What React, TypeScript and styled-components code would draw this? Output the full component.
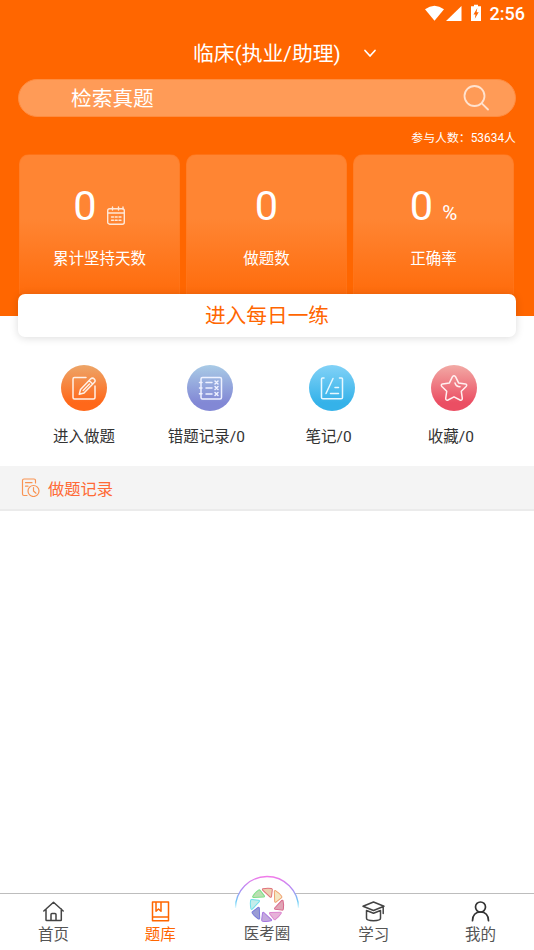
import React from "react";
import styled, { createGlobalStyle } from "styled-components";

const Global = createGlobalStyle`
  * { box-sizing: border-box; }
  body { margin: 0; background: #fff; font-family: Roboto, "Noto Sans CJK SC", sans-serif; }
  svg { display: block; flex: none; }
`;

const Screen = styled.div`
  width: 534px;
  height: 950px;
  display: flex;
  flex-direction: column;
  background: #fff;
  overflow: hidden;
`;

const Header = styled.header`
  height: 316px;
  flex: none;
  background: #ff6600;
  color: #fff;
`;

const StatusBar = styled.div`
  height: 27px;
  padding: 0 9px 0 0;
  display: flex;
  justify-content: flex-end;
  align-items: center;
  font-size: 18px;
  font-weight: 500;
  line-height: 27px;
`;

const Clock = styled.span`
  margin-left: 6px;
`;

const TitleBar = styled.div`
  height: 52px;
  padding: 2px 0 0 193px;
  display: flex;
  align-items: center;
  gap: 22px;
  font-size: 20.8px;
  line-height: 50px;
  white-space: nowrap;
`;

const SearchBox = styled.div`
  margin: 0 18px;
  height: 38px;
  padding: 0 26px 0 52px;
  border-radius: 19px;
  background: #ff9b57;
  border: 1px solid #ff8c3f;
  display: flex;
  align-items: center;
  justify-content: space-between;
  font-size: 20.7px;
  line-height: 36px;
`;

const SearchHint = styled.span`
  padding-top: 2px;
`;

const Participants = styled.div`
  height: 37px;
  padding: 3px 18px 0 0;
  text-align: right;
  font-size: 11.9px;
  line-height: 37px;
`;

const Stats = styled.div`
  display: grid;
  grid-template-columns: repeat(3, 161px);
  gap: 6px;
  padding-left: 19px;
`;

const StatCard = styled.div`
  height: 140px;
  border-radius: 10px 10px 0 0;
  background: linear-gradient(#ff8533 0%, #ff8533 46%, #ff6c0c 100%);
  border: 1px solid rgba(255, 120, 30, 0.5);
  border-bottom: 0;
  display: flex;
  flex-direction: column;
  align-items: center;
`;

const StatValue = styled.div`
  height: 80px;
  padding-top: 26px;
  display: flex;
  align-items: baseline;
  gap: 9px;
  font-size: 41.5px;
  line-height: 49px;
`;

const Unit = styled.span`
  font-size: 20.5px;
`;

const CalendarSlot = styled.span`
  align-self: flex-start;
  margin: 25px 0 0 0;
`;

const StatLabel = styled.div`
  margin-top: 12px;
  font-size: 15.5px;
  line-height: 24px;
`;

const DailyButton = styled.button`
  position: relative;
  flex: none;
  height: 43px;
  margin: -22px 18px 0;
  padding: 1px 0 0;
  border: 0;
  border-radius: 7px;
  background: #fff;
  color: #ff6600;
  box-shadow: 0 1px 8px rgba(0, 0, 0, 0.14);
  font: 20.7px/43px Roboto, "Noto Sans CJK SC", sans-serif;
`;

const Shortcuts = styled.div`
  height: 129px;
  flex: none;
  display: grid;
  grid-template-columns: repeat(4, 122.25px);
  padding: 28px 0 0 23px;
`;

const Shortcut = styled.div`
  display: flex;
  flex-direction: column;
  align-items: center;
  color: #333;
  font-size: 15.5px;
  line-height: 24px;
`;

const Disc = styled.div<{ $from: string; $to: string; $shift?: number }>`
  width: 46px;
  height: 46px;
  margin: 0 0 14px ${(p) => (p.$shift ?? 0) * 2}px;
  border-radius: 50%;
  background: linear-gradient(${(p) => p.$from}, ${(p) => p.$to} 82%);
  display: grid;
  place-items: center;
`;

const RecordHeader = styled.div`
  height: 45px;
  flex: none;
  padding-left: 21px;
  border-bottom: 2px solid #ebebeb;
  background: #f4f4f4;
  display: flex;
  align-items: center;
  gap: 8px;
  color: #ff6a36;
  font-size: 16.3px;
`;

const Records = styled.main`
  flex: 1;
`;

const Nav = styled.nav`
  height: 57px;
  flex: none;
  border-top: 1px solid #bdbdbd;
  background: #fff;
  display: grid;
  grid-template-columns: repeat(5, 1fr);
`;

const NavItem = styled.div<{ $active?: boolean }>`
  display: flex;
  flex-direction: column;
  align-items: center;
  gap: 1px;
  padding-top: 6px;
  color: ${(p) => (p.$active ? "#ff6600" : "#555")};
  font-size: 15.5px;
  line-height: 22px;
  white-space: nowrap;
`;

const CenterItem = styled(NavItem)`
  margin-top: -19px;
  padding-top: 0;
  gap: 0;
`;

const Line = ({ size, color = "currentColor", width = 1.5, children }: { size: number; color?: string; width?: number; children: React.ReactNode }) => (
  <svg width={size} height={size} viewBox={`0 0 ${size} ${size}`} fill="none" stroke={color} strokeWidth={width} strokeLinecap="round" strokeLinejoin="round">
    {children}
  </svg>
);

const StatusIcons = () => (
  <svg width="60" height="20" viewBox="0 0 60 20" fill="#fff">
    <path d="M1 5.3Q10.5-2 20 5.3L10.5 16.8Z" />
    <path d="M37.5 2V17H22Z" />
    <path fillRule="evenodd" d="M48 2.2H50V0.7H54V2.2H57V17H47V2.2ZM53.3 4L49.5 10.4H51.5L50.8 14.8L54.7 8.3H52.6Z" />
  </svg>
);

const Calendar = () => (
  <Line size={20} color="#ffe8d8" width={1.4}>
    <rect x="1.7" y="2.7" width="16.6" height="15.5" rx="2" />
    <path d="M2 7H18M6.5 1V4M12.5 1V4M17 1V3M5.5 11H7.5M9.2 11H11.2M13 11H15M5.5 14.2H7.5M9.2 14.2H11.2M13 14.2H15" />
  </Line>
);

const petals = [
  { edge: "#e0707a", fill: "#edcfb1" },
  { edge: "#f0a070", fill: "#f4e7c1" },
  { edge: "#d8688c", fill: "#e0a5b5" },
  { edge: "#dc86cf", fill: "#e6b2d8" },
  { edge: "#a878e0", fill: "#c4a9dd" },
  { edge: "#7678d8", fill: "#9a9cd4" },
  { edge: "#6fdfea", fill: "#c4edea" },
  { edge: "#7ee08a", fill: "#bbdfb2" },
];

const Aperture = () => (
  <svg width="66" height="48" viewBox="0 0 66 48" fill="none">
    <defs>
      <linearGradient id="halo" x1="0" y1="0" x2="0" y2="1">
        <stop offset="0" stopColor="#f17be9" />
        <stop offset=".4" stopColor="#b18bf4" />
        <stop offset=".8" stopColor="#6ecdf6" />
        <stop offset="1" stopColor="#e6fcff" />
      </linearGradient>
    </defs>
    <path d="M1.5 33A31.5 31.5 0 0 1 64.5 33V48H1.5Z" fill="#fff" />
    <path d="M1.5 33A31.5 31.5 0 0 1 64.5 33" stroke="url(#halo)" strokeWidth="1.3" />
    <g strokeWidth="1" strokeLinejoin="round">
      {petals.map((p, i) => (
        <path
          key={p.edge}
          d="M-4.6 -15.9Q-.3 -17.1 3.8 -16.5Q4.9 -16.3 4.8 -15.2L4.2 -8.3Q3.9 -7.4 2.9 -7.8L-4.9 -14.6Q-5.5 -15.5 -4.6 -15.9Z"
          fill={p.fill}
          stroke={p.edge}
          transform={`translate(33 29.8) rotate(${i * 45 + 2})`}
        />
      ))}
    </g>
  </svg>
);

const App = () => (
  <>
    <Global />
    <Screen>
      <Header>
        <StatusBar>
          <StatusIcons />
          <Clock>2:56</Clock>
        </StatusBar>
        <TitleBar>
          <span>临床(执业/助理)</span>
          <Line size={14} width={1.7}><path d="M2 3.5L7 9L12 3.5" /></Line>
        </TitleBar>
        <SearchBox>
          <SearchHint>检索真题</SearchHint>
          <Line size={26} color="#ffe2cf" width={1.8}><circle cx="11.5" cy="11" r="10" /><path d="M18.8 18.3L25 24.5" /></Line>
        </SearchBox>
        <Participants>参与人数：53634人</Participants>
        <Stats>
          <StatCard>
            <StatValue>0<CalendarSlot><Calendar /></CalendarSlot></StatValue>
            <StatLabel>累计坚持天数</StatLabel>
          </StatCard>
          <StatCard>
            <StatValue>0</StatValue>
            <StatLabel>做题数</StatLabel>
          </StatCard>
          <StatCard>
            <StatValue>0<Unit>%</Unit></StatValue>
            <StatLabel>正确率</StatLabel>
          </StatCard>
        </Stats>
      </Header>
      <DailyButton>进入每日一练</DailyButton>
      <Shortcuts>
        <Shortcut>
          <Disc $from="#eda568" $to="#ff681a">
            <Line size={26} color="#fff0e6"><path d="M15 2.5H3.5Q2 2.5 2 4V22.5Q2 24 3.5 24H22.5Q24 24 24 22.5V11M9.5 14.5L19.5 4Q21.5 2.2 23.3 4Q25 5.8 23.2 7.5L13 18L8.3 19.3ZM18 5.5L21.7 9M12.2 15.5L18.5 9" /></Line>
          </Disc>
          进入做题
        </Shortcut>
        <Shortcut>
          <Disc $from="#a9cbe6" $to="#8288d5" $shift={3.4}>
            <Line size={26} color="#eef1ff"><rect x="4" y="2.5" width="20.5" height="21.5" rx="1.5" /><path d="M2.5 7.5H5M2.5 13H5M2.5 18.8H5M9 7.5H15M9 13H15M9 19H15M18 6L21 9M21 6L18 9M18 11.5L21 14.5M21 11.5L18 14.5M18 17.5L21 20.5M21 17.5L18 20.5" /></Line>
          </Disc>
          错题记录/0
        </Shortcut>
        <Shortcut>
          <Disc $from="#82d2f7" $to="#35b2e9" $shift={3.2}>
            <Line size={26} color="#e8f8ff"><path d="M5 3H3.5Q2.5 3 2.5 4V22.5Q2.5 23.8 4 23.8H22Q23.5 23.8 23.5 22.5V4Q23.5 3 22.5 3H20.5M14 3.5L7 18.5M16 12.5H19.5M11.5 18.5H19.5" /></Line>
          </Disc>
          笔记/0
        </Shortcut>
        <Shortcut>
          <Disc $from="#f2aaa5" $to="#eb4e63" $shift={3}>
            <Line size={28} color="#fff0f0"><path d="M12.5 2.6Q14 .7 15.5 2.6L18.6 8.9L25.4 9.9Q27.6 10.6 26.1 12.5L21.3 17.3L22.3 24.4Q22.2 26.8 20 26L14 22.8L8 26Q5.8 26.8 5.7 24.4L6.7 17.3L1.9 12.5Q.4 10.6 2.6 9.9L9.4 8.9ZM15 9Q16 12.7 20 12.7" /></Line>
          </Disc>
          收藏/0
        </Shortcut>
      </Shortcuts>
      <RecordHeader>
        <Line size={19} color="#f99352" width={1.2}><path d="M6 17.5H3Q1.5 17.5 1.5 16V2.5Q1.5 1 3 1H13Q14.5 1 14.5 2.5V5M4.5 4.7H11M4.5 8.2H7M12.5 9.5V13L15 15.2" /><circle cx="12.5" cy="13" r="5.5" /></Line>
        做题记录
      </RecordHeader>
      <Records />
      <Nav>
        <NavItem>
          <Line size={23} color="#444" width={1.5}><path d="M1.8 11L11.5 2.2L21.2 11M4 9V20Q4 20.5 4.8 20.5H18.7Q19.3 20.5 19.3 20V9M9 20V14.5Q9 13.5 10 13.5H13Q14 13.5 14 14.5V20" /></Line>
          首页
        </NavItem>
        <NavItem $active>
          <Line size={23} width={1.5}><path d="M3.5 2H19.5V20.7H3.5ZM3.5 17H19.5M7 2V11.2L9.5 9L12 11.2V2" /></Line>
          题库
        </NavItem>
        <CenterItem>
          <Aperture />
          医考圈
        </CenterItem>
        <NavItem>
          <Line size={23} color="#444" width={1.5}><path d="M1 6.2L11.5 2L22 6.2L11.5 10.5ZM4.5 10.5V18.3Q4.5 20.7 11.5 20.7Q18.5 20.7 18.5 18.3V10.5L11.5 13.2L4.5 10.5M21.2 7V13.5" /></Line>
          学习
        </NavItem>
        <NavItem>
          <Line size={23} color="#333" width={1.7}><circle cx="11.5" cy="7" r="5" /><path d="M3.5 20.7Q3.8 12 11.5 12Q19.2 12 19.5 20.7" /></Line>
          我的
        </NavItem>
      </Nav>
    </Screen>
  </>
);

export default App;
